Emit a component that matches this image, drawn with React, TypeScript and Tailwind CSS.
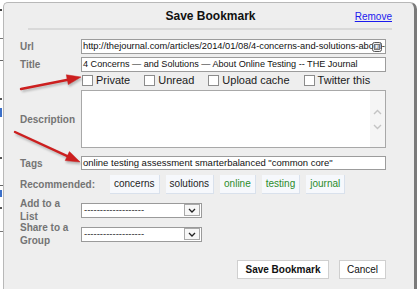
import React from 'react';

function Label({ children, className = '' }: { children: React.ReactNode; className?: string }) {
  return (
    <div className={`w-[61px] shrink-0 text-[10px] font-bold leading-[13px] text-[#747474] ${className}`}>
      {children}
    </div>
  );
}

function Checkbox({ label }: { label: string }) {
  return (
    <div className="flex items-center gap-[3px]">
      <span className="block h-[11px] w-[11px] border border-[#8c8c8c] bg-white" />
      <span className="text-[11px] leading-[13px] text-[#1a1a1a]">{label}</span>
    </div>
  );
}

function Chip({ label, green = false }: { label: string; green?: boolean }) {
  return (
    <span
      className={`flex h-[19px] items-center border-b border-r border-[#d9e1ec] bg-[#f6f8fc] px-[4px] text-[10px] leading-none ${
        green ? 'text-[#2b8c2b]' : 'text-[#1e1e1e]'
      }`}
    >
      {label}
    </span>
  );
}

function Select() {
  return (
    <div className="flex h-[15px] w-[121px] items-center justify-between border border-[#9a9a9a] bg-white pl-[2px] pr-[1px]">
      <span className="text-[9.5px] leading-none text-[#222]">-------------------</span>
      <span className="flex h-[12px] w-[16px] items-center justify-center border border-[#a9a9a9] bg-[#f7f7f7]">
        <svg width="8" height="5" viewBox="0 0 8 5">
          <path d="M1 1 L4 4 L7 1" fill="none" stroke="#222" strokeWidth="1.3" />
        </svg>
      </span>
    </div>
  );
}

function Arrows() {
  return (
    <svg className="pointer-events-none absolute left-0 top-0" width="420" height="289" viewBox="0 0 420 289">
      <defs>
        <filter id="blur" x="-20%" y="-20%" width="140%" height="140%">
          <feGaussianBlur stdDeviation="1.2" />
        </filter>
      </defs>
      <g opacity="0.35" filter="url(#blur)" transform="translate(1,2)" fill="#555" stroke="#555">
        <line x1="21" y1="89" x2="68" y2="79.7" strokeWidth="2.6" />
        <polygon points="81,77 68.3,84.6 66.3,74.8" />
        <line x1="15" y1="132" x2="67.3" y2="156.1" strokeWidth="2.6" />
        <polygon points="80,162 65.2,160.6 69.4,151.6" />
      </g>
      <g fill="#cc1f1f" stroke="#cc1f1f">
        <line x1="21" y1="89" x2="68" y2="79.7" strokeWidth="2.4" strokeLinecap="round" />
        <polygon points="81,77 68.3,84.6 66.3,74.8" strokeWidth="0.5" />
        <line x1="15" y1="132" x2="67.3" y2="156.1" strokeWidth="2.4" strokeLinecap="round" />
        <polygon points="80,162 65.2,160.6 69.4,151.6" strokeWidth="0.5" />
      </g>
    </svg>
  );
}

export default function App() {
  return (
    <div className="relative h-[289px] w-[420px] overflow-hidden bg-white font-['Liberation_Sans',Arial,sans-serif]">
      <div className="flex">
        {/* page behind, left edge */}
        <div className="flex w-[3px] shrink-0 flex-col">
          <span className="mt-[9px] h-[2px] w-[2px] bg-[#444]" />
          <span className="mt-[27px] h-[1px] w-[3px] bg-[#777]" />
          <span className="mt-[21px] h-[1px] w-[3px] bg-[#666]" />
          <span className="mt-[37px] h-[2px] w-[2px] bg-[#555]" />
          <span className="mt-[8px] h-[9px] w-[2px] bg-[#3b6fc9]" />
          <span className="mt-[40px] h-[2px] w-[2px] bg-[#555]" />
          <span className="mt-[26px] h-[1px] w-[3px] bg-[#666]" />
          <span className="mt-[4px] h-[7px] w-[2px] bg-[#3b6fc9]" />
          <span className="mt-[10px] h-[2px] w-[2px] bg-[#555]" />
          <span className="mt-[22px] h-[1px] w-[3px] bg-[#777]" />
        </div>

        {/* dialog */}
        <div className="mt-[2px] h-[300px] w-[414px] shrink-0 rounded-tl-[5px] rounded-tr-[7px] border-l border-t border-r-[3px] border-l-[#b8b8b8] border-t-[#b8b8b8] border-r-[#7a7a7a] bg-[#eeeeee]">
          {/* header */}
          <div className="grid h-[20px] grid-cols-[1fr_auto_1fr] items-end text-[10px] leading-[14px]">
            <div />
            <div className="pl-[3px] text-[12px] font-bold leading-[14px] text-[#111]">Save Bookmark</div>
            <div className="justify-self-end pr-[22px] leading-[13px]">
              <span className="text-[10px] text-[#1a1aee] underline">Remove</span>
            </div>
          </div>
          <div className="ml-[24px] mt-[5px] h-[2px] w-[364px] bg-[#d9d9d9]" />

          <div className="flex flex-col pl-[16px]">
            {/* Url */}
            <div className="mt-[9px] flex items-center">
              <Label>Url</Label>
              <div className="relative flex h-[15px] w-[305px] items-center overflow-hidden border border-[#9c9c9c] bg-white pl-[1px]">
                <span className="min-w-0 flex-1 overflow-hidden whitespace-nowrap text-[9.3px] leading-none text-[#111]">
                  http://thejournal.com/articles/2014/01/08/4-concerns-and-solutions-about-online-testing.aspx
                </span>
                <svg className="absolute right-[3px] top-[2px]" width="10" height="10" viewBox="0 0 10 10">
                  <rect x="0.5" y="0.5" width="9" height="9" rx="2" fill="#e6e6e6" fillOpacity="0.5" stroke="#555" />
                  <rect x="2.5" y="2.5" width="5" height="5" fill="none" stroke="#777" />
                </svg>
              </div>
            </div>
            {/* Title */}
            <div className="mt-[3px] flex items-center">
              <Label>Title</Label>
              <div className="flex h-[15px] w-[305px] items-center overflow-hidden border border-[#9c9c9c] bg-white pl-[1px]">
                <span className="whitespace-nowrap text-[9.1px] leading-none text-[#111]">
                  4 Concerns — and Solutions — About Online Testing -- THE Journal
                </span>
              </div>
            </div>
            {/* checkboxes */}
            <div className="flex h-[16px] items-center pl-[62px]">
              <div className="flex items-center gap-[14px]">
                <Checkbox label="Private" />
                <Checkbox label="Unread" />
                <Checkbox label="Upload cache" />
                <Checkbox label="Twitter this" />
              </div>
            </div>
            {/* Description */}
            <div className="mt-[2px] flex items-center">
              <Label>Description</Label>
              <div className="flex h-[58px] w-[305px] justify-end border border-[#a8a8a8] bg-white">
                <div className="flex w-[15px] flex-col items-center justify-center gap-[9px] bg-[#f5f5f5]">
                  <svg width="9" height="6" viewBox="0 0 9 6">
                    <path d="M1 5 L4.5 1.5 L8 5" fill="none" stroke="#c4c4c4" strokeWidth="1.4" />
                  </svg>
                  <svg width="9" height="6" viewBox="0 0 9 6">
                    <path d="M1 1 L4.5 4.5 L8 1" fill="none" stroke="#c4c4c4" strokeWidth="1.4" />
                  </svg>
                </div>
              </div>
            </div>
            {/* Tags */}
            <div className="mt-[8px] flex items-center">
              <Label>Tags</Label>
              <div className="flex h-[14px] w-[305px] items-center border border-[#9c9c9c] bg-white pl-[1px]">
                <span className="whitespace-nowrap text-[9.5px] leading-none text-[#111]">
                  online testing assessment smarterbalanced "common core"
                </span>
              </div>
            </div>
            {/* Recommended */}
            <div className="mt-[5px] flex items-center">
              <Label className="w-[90px]">Recommended:</Label>
              <div className="flex gap-[6px]">
                <Chip label="concerns" />
                <Chip label="solutions" />
                <Chip label="online" green />
                <Chip label="testing" green />
                <Chip label="journal" green />
              </div>
            </div>
            {/* Add to list */}
            <div className="mt-[4px] flex h-[24px] items-center">
              <Label>
                Add to a
                <br />
                List
              </Label>
              <Select />
            </div>
            {/* Share to group */}
            <div className="flex h-[24px] items-center">
              <Label>
                Share to a
                <br />
                Group
              </Label>
              <Select />
            </div>
            {/* Buttons */}
            <div className="mt-[14px] flex w-[366px] justify-end gap-[10px]">
              <button className="h-[19px] w-[92px] border border-[#cfcfcf] bg-white text-[10px] font-bold text-[#111]">
                Save Bookmark
              </button>
              <button className="h-[19px] w-[47px] border border-[#cfcfcf] bg-white text-[10px] text-[#111]">
                Cancel
              </button>
            </div>
          </div>
        </div>
      </div>
      <Arrows />
    </div>
  );
}
